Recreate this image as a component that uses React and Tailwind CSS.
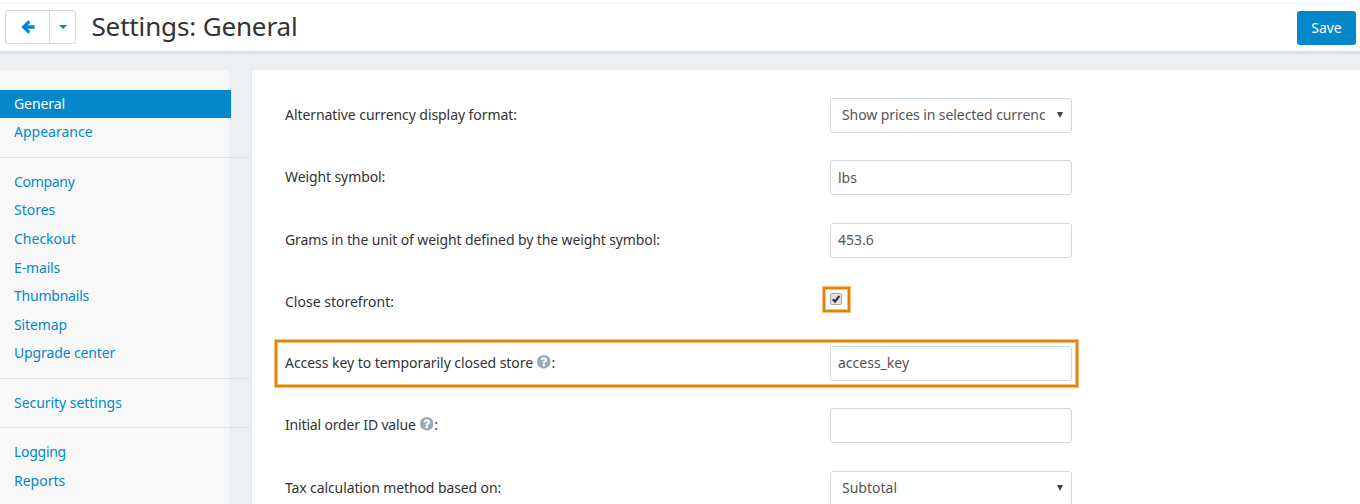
import React from 'react';

const groups = [
  [['General', 'tracking-[-0.1px]'], ['Appearance', '']],
  [
    ['Company', 'tracking-[-0.3px]'],
    ['Stores', ''],
    ['Checkout', ''],
    ['E-mails', 'tracking-[-0.15px]'],
    ['Thumbnails', 'tracking-[-0.22px]'],
    ['Sitemap', 'tracking-[-0.1px]'],
    ['Upgrade center', 'tracking-[-0.13px]'],
  ],
  [['Security settings', 'tracking-[-0.04px]']],
  [['Logging', 'tracking-[-0.28px]'], ['Reports', '']],
];

function Help() {
  return (
    <svg viewBox="128 128 1536 1536" className="mr-px mb-[5px] ml-1 inline-block size-[13.5px] fill-[#98aab9] align-middle">
      <path d="M1024 1376v-192q0-14-9-23t-23-9h-192q-14 0-23 9t-9 23v192q0 14 9 23t23 9h192q14 0 23-9t9-23zm256-672q0-88-55.5-163t-138.5-116-170-41q-243 0-371 213-15 24 8 42l132 100q7 6 19 6 16 0 25-12 53-68 86-92 34-24 86-24 48 0 85.5 26t37.5 59q0 38-20 61t-68 45q-63 28-115.5 86.5t-52.5 125.5v36q0 14 9 23t23 9h192q14 0 23-9t9-23q0-19 21.5-49.5t54.5-49.5q32-18 49-28.5t46-35 44.5-48 28-60.5 12.5-81zm384 192q0 209-103 385.5t-279.5 279.5-385.5 103-385.5-103-279.5-279.5-103-385.5 103-385.5 279.5-279.5 385.5-103 385.5 103 279.5 279.5 103 385.5z" />
    </svg>
  );
}

function Sidebar() {
  return (
    <aside className="w-[230px] shrink-0 rounded-tr-[3px] bg-[#f8f8f8] pt-5 shadow-[0_1px_2px_rgba(0,0,0,0.12)]">
      {groups.map((group, i) => (
        <ul key={i} className={i ? 'mt-2.5 w-[250px] border-t border-[#e2e2e2] pt-2.5' : ''}>
          {group.map(([name, tracking]) => (
            <li
              key={name}
              className={
                name === 'General'
                  ? 'h-[28.45px] w-[231px] bg-[#0388cc] pl-3.5 leading-[28px] text-white'
                  : (i ? 'h-[28.57px]' : 'h-[28.45px]') + ' pl-3.5 leading-[28px] text-[#0388cc]'
              }
            >
              <span className={tracking}>{name}</span>
            </li>
          ))}
        </ul>
      ))}
    </aside>
  );
}

function Row({ label, tracking = '', help, height = 'h-[62px]', children }) {
  return (
    <div className={'relative flex ' + height}>
      <div className="w-[545px] shrink-0 pt-[6px] leading-[22px] text-[#333]">
        <span className={tracking}>{label}</span>
        {help ? <Help /> : null}:
      </div>
      {children}
    </div>
  );
}

function Field({ value, leading = 'leading-[31px]' }) {
  return (
    <div className={'h-[35px] w-[242px] rounded-[3px] border border-[#cfd9e2] bg-white pl-[7px] text-[#555] ' + leading}>
      {value}
    </div>
  );
}

function Select({ value, tracking = '' }) {
  return (
    <div className="flex h-[35px] w-[242px] rounded-[3px] border border-[#cfd9e2] bg-white pr-2 pl-[11px] text-[#555]">
      <div className="h-[33px] w-[203px] overflow-hidden leading-[31px] whitespace-nowrap">
        <span className={tracking}>{value}</span>
      </div>
      <svg viewBox="0 0 6 6" className="mt-[13px] ml-auto h-[6px] w-[6px] fill-[#444]">
        <path d="M0 0h6L3 6z" />
      </svg>
    </div>
  );
}

export default function App() {
  return (
    <div className="flex h-[504px] w-[1360px] flex-col overflow-hidden bg-[#ecf0f3] font-['Noto_Sans',sans-serif] text-[14px]">
      <header className="relative flex h-[51px] shrink-0 items-center bg-white pt-[3px] pr-1 pl-[5px] shadow-[0_2px_2px_1px_rgba(0,0,0,0.06)]">
        <div className="absolute inset-x-0 top-[3px] h-px bg-[#f3f3f3]" />
        <div className="flex h-[34px] w-[71px] rounded-[3px] border border-[#cfd9e2]">
          <div className="flex w-[44px] items-center justify-center border-r border-[#cfd9e2]">
            <svg viewBox="0 0 14 14" className="size-[14px] fill-[#0388cc]">
              <path d="M7.200 .2L.4 7l6.800 6.800 2.300-2.300L6.700 8.700h6.900V5.300H6.700l2.800-2.800z" />
            </svg>
          </div>
          <div className="flex flex-1 items-center justify-center">
            <svg viewBox="0 0 8 4" className="h-1 w-2 fill-[#0388cc]">
              <path d="M0 0h8L4 4z" />
            </svg>
          </div>
        </div>
        <h1 className="mb-0.5 ml-[15.5px] text-[26px] leading-8 tracking-[-0.15px] text-[#333]">Settings: General</h1>
        <button className="mt-0.5 ml-auto h-[34px] w-[59px] rounded-[3px] bg-[#0388cc] pb-0.5 text-white">Save</button>
      </header>
      <div className="flex min-h-0 flex-1 gap-[22px] pt-[19px]">
        <Sidebar />
        <main className="flex-1 rounded-tl-[3px] bg-white pt-7 pl-[33px] shadow-[0_1px_2px_rgba(0,0,0,0.12)]">
          <Row label="Alternative currency display format" tracking="tracking-[-0.07px]">
            <Select value="Show prices in selected currency" tracking="tracking-[-0.08px]" />
          </Row>
          <Row label="Weight symbol" tracking="tracking-[-0.1px]" height="h-[63px]">
            <Field value="lbs" leading="leading-[33px]" />
          </Row>
          <Row label="Grams in the unit of weight defined by the weight symbol" tracking="tracking-[-0.11px]">
            <Field value="453.6" />
          </Row>
          <Row label="Close storefront" height="h-[61px]">
            <div className="mt-0.5 -ml-[7px] h-[25px] w-[27px] border-2 border-[#e58300] pt-1 pl-[5px] shadow-[0_0_0_1px_#f2c180,inset_0_0_0_1px_#f2c180]">
              <svg viewBox="0 0 12 12" className="block size-3">
                <rect x=".5" y=".5" width="11" height="11" rx="1.500" fill="#e3e3e3" stroke="#a8a8a8" />
                <path d="M2.800 6.300L5 8.600 9.300 3" fill="none" stroke="#333" strokeWidth="2.200" />
              </svg>
            </div>
          </Row>
          <Row label="Access key to temporarily closed store" tracking="tracking-[-0.05px]" help>
            <Field value="access_key" />
            <div className="absolute -top-1.5 -left-2.5 h-[47px] w-[803px] border-2 border-[#e58300] shadow-[0_0_0_1px_#f2c180,inset_0_0_0_1px_#f2c180]" />
          </Row>
          <Row label="Initial order ID value" tracking="tracking-[-0.17px]" help height="h-[63px]">
            <Field value="" />
          </Row>
          <Row label="Tax calculation method based on" tracking="tracking-[-0.11px]">
            <Select value="Subtotal" />
          </Row>
        </main>
      </div>
    </div>
  );
}
